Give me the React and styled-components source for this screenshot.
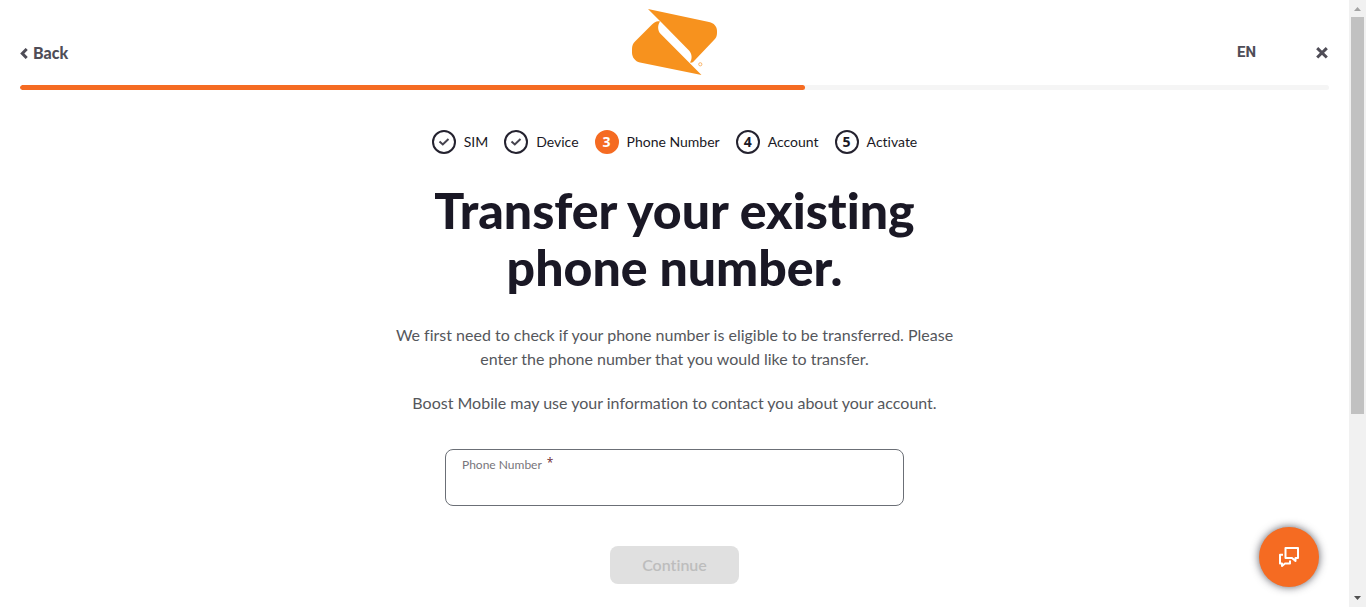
import React from "react";
import styled, { createGlobalStyle } from "styled-components";

const orange = "#f56b22";
const ink = "#1a1825";
const body = "Lato, 'Open Sans', sans-serif";

const GlobalStyle = createGlobalStyle`
  * { box-sizing: border-box; }
  html { overflow: hidden; }
  body {
    margin: 0;
    background: #fff;
    color: #55575c;
    font: 16px/24px ${body};
    font-variant-ligatures: none;
  }
  h1, p, ol { margin: 0; padding: 0; }
  button, input { font: inherit; color: inherit; }
`;

const Page = styled.div`
  min-height: 100vh;
  padding-right: 17px;
`;

const Header = styled.header`
  padding: 0 20px;
`;

const Bar = styled.div`
  display: grid;
  grid-template-columns: 1fr auto 1fr;
  align-items: center;
  height: 84px;
  margin-bottom: 1px;
`;

const BackLink = styled.a`
  display: inline-flex;
  align-items: center;
  gap: 5px;
  justify-self: start;
  padding-top: 22px;
  color: #4f4d57;
  font-size: 16px;
  font-weight: 900;
  text-decoration: none;
`;

const Actions = styled.div`
  display: flex;
  align-items: center;
  justify-content: flex-end;
  gap: 59px;
  padding-top: 20px;
  color: #4f4d57;
`;

const PlainButton = styled.button`
  display: flex;
  align-items: center;
  padding: 0;
  border: 0;
  background: none;
  font: 700 15px/24px Roboto, sans-serif;
  cursor: pointer;
`;

const Track = styled.div`
  height: 5px;
  border-radius: 3px;
  background: #f5f5f5;
  overflow: hidden;
`;

const Fill = styled.div`
  width: 60%;
  height: 100%;
  border-radius: 3px;
  background: ${orange};
`;

const Main = styled.main`
  display: flex;
  flex-direction: column;
  align-items: center;
  padding: 40px 20px 24px;
  text-align: center;
`;

const Steps = styled.ol`
  display: flex;
  gap: 16px;
  list-style: none;
`;

const Step = styled.li`
  display: flex;
  align-items: center;
  gap: 8px;
  color: ${ink};
  font-size: 14px;
`;

const Dot = styled.span`
  display: flex;
  align-items: center;
  justify-content: center;
  width: 24px;
  height: 24px;
  border: 2px solid ${(p) => (p.$current ? orange : "#24222f")};
  border-radius: 50%;
  background: ${(p) => (p.$current ? orange : "#fff")};
  color: ${(p) => (p.$current ? "#fff" : ink)};
  font: 700 14px/20px "Open Sans", sans-serif;
`;

const Title = styled.h1`
  max-width: 570px;
  margin-top: 28px;
  color: ${ink};
  font-size: 50px;
  font-weight: 900;
  line-height: 57px;
`;

const Copy = styled.p`
  max-width: 580px;
  margin-top: ${(p) => p.$top}px;
`;

const Form = styled.form`
  display: flex;
  flex-direction: column;
  align-items: center;
  width: 100%;
  max-width: 459px;
  margin-top: 34px;
`;

const Field = styled.div`
  width: 100%;
  padding: 7px 16px 9px;
  border: 1px solid #6b6f76;
  border-radius: 8px;
  text-align: left;
`;

const Label = styled.label`
  display: flex;
  gap: 5px;
  color: #77757b;
  font-size: 12px;
  line-height: 15px;
`;

const Star = styled.span`
  color: #6d2a35;
  font: 12px/12px "Open Sans", sans-serif;
`;

const Input = styled.input`
  display: block;
  width: 100%;
  height: 24px;
  padding: 0;
  border: 0;
  outline: 0;
  background: transparent;
`;

const Submit = styled.button`
  margin-top: 40px;
  padding: 7px 32px;
  border: 0;
  border-radius: 8px;
  background: #e0e0e0;
  color: #bdbdbd;
  font-weight: 600;
`;

const Chat = styled.button`
  position: fixed;
  right: 47px;
  bottom: 20px;
  display: flex;
  align-items: center;
  justify-content: center;
  width: 60px;
  height: 60px;
  padding: 0;
  border: 0;
  border-radius: 50%;
  background: ${orange};
  box-shadow: 0 0 8px rgba(26, 24, 37, 0.7);
  cursor: pointer;
`;

const Scrollbar = styled.div`
  position: fixed;
  top: 0;
  right: 0;
  bottom: 0;
  display: flex;
  flex-direction: column;
  align-items: center;
  width: 17px;
  background: #f1f1f1;
`;

const ScrollArea = styled.div`
  display: grid;
  grid-template-rows: 9fr 4fr;
  flex: 1;
  width: 13px;
`;

const Thumb = styled.div`
  background: #c1c1c1;
`;

const Arrow = styled.svg`
  display: block;
  width: 17px;
  height: 17px;
`;

const steps = ["SIM", "Device", "Phone Number", "Account", "Activate"];
const current = 2;

function Logo() {
  return (
    <svg width="86" height="66" viewBox="0 0 86 66" role="img" aria-label="Boost Mobile">
      <path fill="#f7921e" d="M16 0 L77 13 C82 14 85 17.500 85 22 V24 C85 27 84 29 82 31 L63 51 C61.500 53 60 54 58 53.500 C60.500 50 60 44.500 57 41.500 L29.500 13.500 Z" />
      <path fill="#f7921e" d="M69.500 66 L8 53.500 C3 52.500 0 48 0 43.500 V40 C0 36.500 1 34.500 3 32.500 L20 15.500 C22.500 13 25 11.500 28 12.500 C25.500 16 25.500 21.500 28.500 24.700 Z" />
      <circle cx="68.300" cy="55.300" r="1.600" fill="none" stroke="#f9b469" />
    </svg>
  );
}

function Check() {
  return (
    <svg width="12" height="10" viewBox="0 0 12 10" fill="none" stroke="#45434e" strokeWidth="2" aria-label="Complete">
      <path d="M1.500 4.500 L4.800 7.500 L10.500 2" />
    </svg>
  );
}

export default function App() {
  return (
    <Page>
      <GlobalStyle />
      <Header>
        <Bar>
          <BackLink href="#back">
            <svg width="8" height="11" viewBox="0 0 8 11" fill="none" stroke="#4f4d57" strokeWidth="3" aria-hidden="true">
              <path d="M6.700 1 L2.300 5.500 L6.700 10" />
            </svg>
            Back
          </BackLink>
          <Logo />
          <Actions>
            <PlainButton type="button">EN</PlainButton>
            <PlainButton type="button" aria-label="Close">
              <svg width="14" height="14" viewBox="0 0 14 14" fill="none" stroke="#4f4d57" strokeWidth="3" aria-hidden="true">
                <path d="M2.200 3.200 L11.800 12.500 M11.800 3.200 L2.200 12.500" />
              </svg>
            </PlainButton>
          </Actions>
        </Bar>
        <Track role="progressbar" aria-label="Activation progress" aria-valuenow={60}>
          <Fill />
        </Track>
      </Header>
      <Main>
        <Steps>
          {steps.map((name, i) => (
            <Step key={name} aria-current={i === current ? "step" : undefined}>
              <Dot $current={i === current}>{i < current ? <Check /> : i + 1}</Dot>
              {name}
            </Step>
          ))}
        </Steps>
        <Title>Transfer your existing phone number.</Title>
        <Copy $top={27}>
          We first need to check if your phone number is eligible to be transferred. Please enter the
          phone number that you would like to transfer.
        </Copy>
        <Copy $top={20}>Boost Mobile may use your information to contact you about your account.</Copy>
        <Form>
          <Field>
            <Label htmlFor="phone">
              Phone Number <Star>*</Star>
            </Label>
            <Input id="phone" type="tel" required />
          </Field>
          <Submit type="submit" disabled>
            Continue
          </Submit>
        </Form>
      </Main>
      <Chat type="button" aria-label="Chat with us">
        <svg width="22" height="22" viewBox="0 0 22 22" fill="none" stroke="#fff" strokeWidth="2" strokeLinejoin="round" aria-hidden="true">
          <path d="M8 2 H20 V12 H17.500 V15 L14 12 H7.500 V2 Z" />
          <path d="M5 8.800 H2 V17.500 H4 V20 L7 17.500 H12 V14.500" />
        </svg>
      </Chat>
      <Scrollbar aria-hidden="true">
        <Arrow viewBox="0 0 17 17">
          <path fill="#a3a3a3" d="M5 11 L8.500 7 L12 11 Z" />
        </Arrow>
        <ScrollArea>
          <Thumb />
        </ScrollArea>
        <Arrow viewBox="0 0 17 17">
          <path fill="#505050" d="M5 6 L12 6 L8.500 10 Z" />
        </Arrow>
      </Scrollbar>
    </Page>
  );
}
